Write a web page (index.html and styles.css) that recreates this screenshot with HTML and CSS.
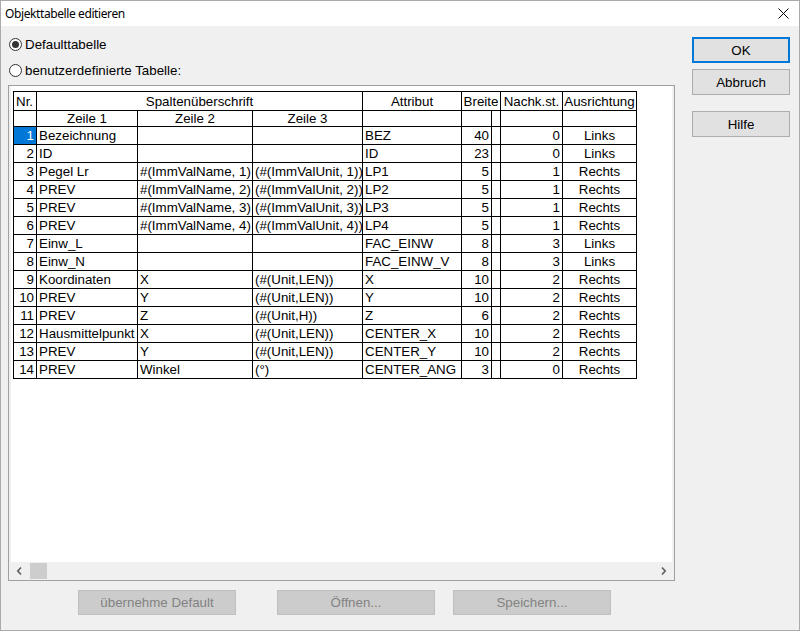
FILE: index.html
```html
<!DOCTYPE html>
<html>
<head>
<meta charset="utf-8">
<link rel="stylesheet" href="styles.css">
</head>
<body>
<div class="window">
  <div class="titlebar">
    <span class="title">Objekttabelle editieren</span>
    <svg class="close" width="11" height="11" viewBox="0 0 11 11"><path d="M0.5 0.5 L10.5 10.5 M10.5 0.5 L0.5 10.5" stroke="#000" stroke-width="1" fill="none"/></svg>
  </div>
  <div class="client">
    <div class="leftcol">
      <div class="radio"><span class="rb checked"></span><span>Defaulttabelle</span></div>
      <div class="radio"><span class="rb"></span><span>benutzerdefinierte Tabelle:</span></div>
      <div class="frame">
        <div class="sheet">
          <div class="grid">
            <div class="c h1">Nr.</div>
            <div class="c h1 m span3">Spaltenüberschrift</div>
            <div class="c h1 m">Attribut</div>
            <div class="c h1 m span2">Breite</div>
            <div class="c h1 m">Nachk.st.</div>
            <div class="c h1 m">Ausrichtung</div>

            <div class="c"></div><div class="c m">Zeile 1</div><div class="c m">Zeile 2</div><div class="c m">Zeile 3</div><div class="c"></div><div class="c"></div><div class="c"></div><div class="c"></div><div class="c"></div>

            <div class="c r sel">1</div><div class="c">Bezeichnung</div><div class="c"></div><div class="c"></div><div class="c">BEZ</div><div class="c r">40</div><div class="c"></div><div class="c r">0</div><div class="c m">Links</div>
            <div class="c r">2</div><div class="c">ID</div><div class="c"></div><div class="c"></div><div class="c">ID</div><div class="c r">23</div><div class="c"></div><div class="c r">0</div><div class="c m">Links</div>
            <div class="c r">3</div><div class="c">Pegel Lr</div><div class="c">#(ImmValName, 1)</div><div class="c">(#(ImmValUnit, 1))</div><div class="c">LP1</div><div class="c r">5</div><div class="c"></div><div class="c r">1</div><div class="c m">Rechts</div>
            <div class="c r">4</div><div class="c">PREV</div><div class="c">#(ImmValName, 2)</div><div class="c">(#(ImmValUnit, 2))</div><div class="c">LP2</div><div class="c r">5</div><div class="c"></div><div class="c r">1</div><div class="c m">Rechts</div>
            <div class="c r">5</div><div class="c">PREV</div><div class="c">#(ImmValName, 3)</div><div class="c">(#(ImmValUnit, 3))</div><div class="c">LP3</div><div class="c r">5</div><div class="c"></div><div class="c r">1</div><div class="c m">Rechts</div>
            <div class="c r">6</div><div class="c">PREV</div><div class="c">#(ImmValName, 4)</div><div class="c">(#(ImmValUnit, 4))</div><div class="c">LP4</div><div class="c r">5</div><div class="c"></div><div class="c r">1</div><div class="c m">Rechts</div>
            <div class="c r">7</div><div class="c">Einw_L</div><div class="c"></div><div class="c"></div><div class="c">FAC_EINW</div><div class="c r">8</div><div class="c"></div><div class="c r">3</div><div class="c m">Links</div>
            <div class="c r">8</div><div class="c">Einw_N</div><div class="c"></div><div class="c"></div><div class="c">FAC_EINW_V</div><div class="c r">8</div><div class="c"></div><div class="c r">3</div><div class="c m">Links</div>
            <div class="c r">9</div><div class="c">Koordinaten</div><div class="c">X</div><div class="c">(#(Unit,LEN))</div><div class="c">X</div><div class="c r">10</div><div class="c"></div><div class="c r">2</div><div class="c m">Rechts</div>
            <div class="c r">10</div><div class="c">PREV</div><div class="c">Y</div><div class="c">(#(Unit,LEN))</div><div class="c">Y</div><div class="c r">10</div><div class="c"></div><div class="c r">2</div><div class="c m">Rechts</div>
            <div class="c r">11</div><div class="c">PREV</div><div class="c">Z</div><div class="c">(#(Unit,H))</div><div class="c">Z</div><div class="c r">6</div><div class="c"></div><div class="c r">2</div><div class="c m">Rechts</div>
            <div class="c r">12</div><div class="c">Hausmittelpunkt</div><div class="c">X</div><div class="c">(#(Unit,LEN))</div><div class="c">CENTER_X</div><div class="c r">10</div><div class="c"></div><div class="c r">2</div><div class="c m">Rechts</div>
            <div class="c r">13</div><div class="c">PREV</div><div class="c">Y</div><div class="c">(#(Unit,LEN))</div><div class="c">CENTER_Y</div><div class="c r">10</div><div class="c"></div><div class="c r">2</div><div class="c m">Rechts</div>
            <div class="c r">14</div><div class="c">PREV</div><div class="c">Winkel</div><div class="c">(°)</div><div class="c">CENTER_ANG</div><div class="c r">3</div><div class="c"></div><div class="c r">0</div><div class="c m">Rechts</div>
          </div>
        </div>
        <div class="hscroll">
          <div class="sbtn"><svg width="17" height="18" viewBox="0 0 17 18"><path d="M10 5.5 L6.8 9 L10 12.5" stroke="#606060" stroke-width="1.7" fill="none"/></svg></div>
          <div class="track"><div class="thumb"></div></div>
          <div class="sbtn"><svg width="17" height="18" viewBox="0 0 17 18"><path d="M7 5.5 L10.2 9 L7 12.5" stroke="#606060" stroke-width="1.7" fill="none"/></svg></div>
        </div>
      </div>
      <div class="bottombtns">
        <div class="btn dis b1">übernehme Default</div>
        <div class="btn dis b2">Öffnen...</div>
        <div class="btn dis b3">Speichern...</div>
      </div>
    </div>
    <div class="rightcol">
      <div class="btn def">OK</div>
      <div class="btn abbr">Abbruch</div>
      <div class="btn hilfe">Hilfe</div>
    </div>
  </div>
</div>
</body>
</html>
```

FILE: styles.css
```css
* { box-sizing: border-box; }
html, body { margin: 0; padding: 0; background: #ffffff; }
body {
  font-family: "Liberation Sans", Arial, sans-serif;
  font-size: 13.33px;
  color: #000;
}
.window {
  width: 800px;
  height: 631px;
  border: 1px solid #aaaaaa;
  background: #f0f0f0;
  display: flex;
  flex-direction: column;
}
.titlebar {
  height: 25px;
  background: #ffffff;
  display: flex;
  align-items: center;
  justify-content: space-between;
  padding: 0 10px 0 4px;
}
.title {
  font-family: "Noto Sans", sans-serif;
  font-size: 12px;
  letter-spacing: -0.4px;
}
.client {
  flex: 1;
  display: flex;
  padding-left: 7px;
}
.leftcol {
  width: 667px;
  padding-top: 5px;
  display: flex;
  flex-direction: column;
}
.radio {
  height: 26px;
  display: flex;
  align-items: center;
  gap: 3px;
  padding-left: 1px;
}
.rb {
  width: 13px;
  height: 13px;
  border: 1px solid #333;
  border-radius: 50%;
  background: #fff;
  display: flex;
  align-items: center;
  justify-content: center;
}
.rb.checked::after {
  content: "";
  width: 7px;
  height: 7px;
  border-radius: 50%;
  background: #333;
}
.frame {
  margin-top: 2px;
  height: 496px;
  border: 1px solid #a0a0a0;
  padding: 0 2px;
  display: flex;
  flex-direction: column;
}
.sheet {
  flex: 1;
  background: #fff;
  padding: 5px 0 0 2px;
}
.grid {
  display: grid;
  grid-template-columns: 23px 101px 115px 110px 99px 30px 9px 62px 74px;
  grid-template-rows: 19px 16px repeat(14, 18px);
  border-left: 1px solid #000;
  border-top: 1px solid #000;
  width: max-content;
}
.c {
  border-right: 1px solid #000;
  border-bottom: 1px solid #000;
  padding: 0 2px;
  white-space: nowrap;
  overflow: hidden;
  display: flex;
  align-items: center;
}
.c.r { justify-content: flex-end; }
.c.m { justify-content: center; }
.span3 { grid-column: span 3; }
.span2 { grid-column: span 2; }
.sel { background: #0078d7; color: #fff; }
.hscroll {
  height: 18px;
  display: flex;
}
.sbtn { width: 17px; height: 18px; }
.sbtn svg { display: block; }
.track { flex: 1; display: flex; align-items: center; }
.thumb { width: 17px; height: 16px; margin-left: 2px; background: #cdcdcd; }
.bottombtns {
  margin-top: 9px;
  display: flex;
  padding-left: 70px;
}
.btn {
  background: #e1e1e1;
  border: 1px solid #adadad;
  display: flex;
  align-items: center;
  justify-content: center;
}
.btn.dis {
  width: 158px;
  height: 25px;
  background: #cccccc;
  border-color: #bfbfbf;
  color: #838383;
}
.b2 { margin-left: 41px; }
.b3 { margin-left: 18px; }
.rightcol {
  margin-left: 17px;
  padding-top: 11px;
  display: flex;
  flex-direction: column;
}
.rightcol .btn { width: 98px; height: 26px; }
.btn.def { border: 2px solid #0078d7; }
.abbr { margin-top: 6px; }
.hilfe { margin-top: 16px; }
```
